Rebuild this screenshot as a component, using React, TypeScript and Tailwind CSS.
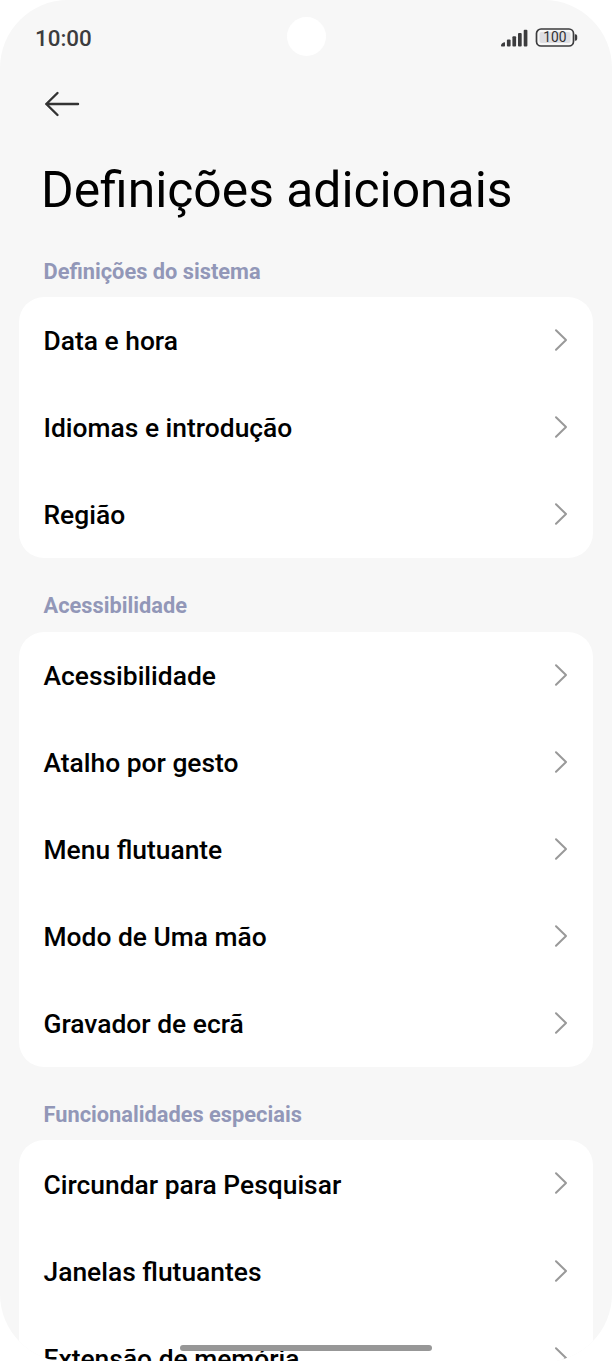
const sections = [
  {
    title: 'Definições do sistema',
    items: ['Data e hora', 'Idiomas e introdução', 'Região'],
  },
  {
    title: 'Acessibilidade',
    items: ['Acessibilidade', 'Atalho por gesto', 'Menu flutuante', 'Modo de Uma mão', 'Gravador de ecrã'],
  },
  {
    title: 'Funcionalidades especiais',
    items: ['Circundar para Pesquisar', 'Janelas flutuantes', 'Extensão de memória'],
  },
];

function SignalIcon() {
  return (
    <svg width="28" height="18" viewBox="0 0 28 18" fill="#3c3c3e">
      <path d="M1 16.5c0-2 2-3 4-3.2v3.2c0 .7-.4 1-1 1H2c-.6 0-1-.3-1-1Z" />
      <rect x="6.9" y="10.5" width="3.7" height="7" rx="1" />
      <rect x="12.4" y="7.2" width="3.7" height="10.3" rx="1" />
      <rect x="18" y="4" width="3.7" height="13.5" rx="1" />
      <rect x="23.7" y="0.7" width="3.7" height="16.8" rx="1" />
    </svg>
  );
}

function BatteryIcon() {
  return (
    <svg width="43" height="20" viewBox="0 0 43 20">
      <rect x="1.5" y="1" width="37" height="17" rx="4.5" fill="none" stroke="#3c3c3e" strokeWidth="1.7" />
      <rect x="4.5" y="4" width="31" height="11" rx="2" fill="#dfdfe3" />
      <path d="M39.8 6.3h.6q1.8 0 1.8 1.8v2.8q0 1.8-1.8 1.8h-.6z" fill="#3c3c3e" />
      <text x="20" y="14.4" fontSize="13.8" textAnchor="middle" fill="#303032">
        100
      </text>
    </svg>
  );
}

function Chevron() {
  return (
    <svg className="-mt-px" width="14" height="24" viewBox="0 0 14 24" fill="none" stroke="#999" strokeWidth="2" strokeLinecap="round" strokeLinejoin="round">
      <path d="M2 2.3 12 12 2 21.7" />
    </svg>
  );
}

export default function App() {
  return (
    <div className="h-[1361px] w-[612px] overflow-hidden bg-white font-['Roboto',sans-serif]">
      <div className="relative h-[1362px] overflow-hidden rounded-[68px] bg-[#f7f7f7]">
        {/* Camera cutout */}
        <div className="absolute top-[17px] left-[286.5px] size-[39px] rounded-full bg-white" />

        {/* Status bar */}
        <div className="flex h-[75px] items-center justify-between pr-[34px] pl-[35px]">
          <span className="pt-[3px] text-[22.4px] font-medium text-[#3c3c3e]">10:00</span>
          <div className="flex items-center gap-[7px]">
            <SignalIcon />
            <BatteryIcon />
          </div>
        </div>

        <header className="px-[41px]">
          <div className="flex h-[58px] items-center pl-[3px]">
            <svg width="36" height="26" viewBox="0 0 36 26" fill="none" stroke="#333" strokeWidth="2.4" strokeLinecap="round" strokeLinejoin="round">
              <path d="M13.5 2 2.3 13 13.5 24M2.3 13H34" />
            </svg>
          </div>
          <h1 className="mt-[27px] h-[61px] text-[49.8px] leading-[60px] whitespace-nowrap text-black">Definições adicionais</h1>
        </header>

        <main className="px-[19px] pt-[2.5px]">
          {sections.map((section) => (
            <section key={section.title}>
              <h2 className="h-[73.4px] pt-[34px] pl-[24.5px] text-[21.8px] leading-[28px] font-bold text-[#9297b8]">
                {section.title}
              </h2>
              <ul className="rounded-[25px] bg-white pr-[25px] pl-[24.5px]">
                {section.items.map((item) => (
                  <li key={item} className="flex h-[87.1px] items-center justify-between text-[26.4px] font-medium text-black">
                    <span className="pt-[3px]">{item}</span>
                    <Chevron />
                  </li>
                ))}
              </ul>
            </section>
          ))}
        </main>

        {/* Gesture bar */}
        <div className="absolute top-[1345px] left-[180px] h-[6px] w-[252px] rounded-full bg-[#979797]" />
      </div>
    </div>
  );
}
